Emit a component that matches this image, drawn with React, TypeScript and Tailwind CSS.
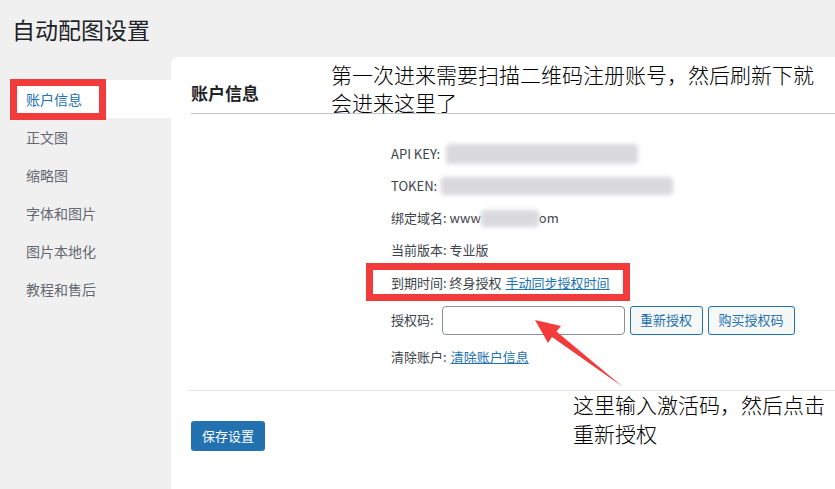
import React from 'react';

const navItems = ['账户信息', '正文图', '缩略图', '字体和图片', '图片本地化', '教程和售后'];

function Blur({ className }: { className: string }) {
  return <span className={`inline-block align-middle rounded-sm bg-[#d9d9de] blur-[2px] ${className}`} />;
}

export default function App() {
  return (
    <div
      className="relative w-[835px] h-[489px] overflow-hidden bg-[#f0f0f1] text-[#3c434a]"
      style={{ fontFamily: '"Noto Sans CJK SC", "Noto Sans", sans-serif' }}
    >
      <div className="h-[57px] pl-[12px] pt-[13px]">
        <h1 className="text-[23px] leading-[32px] text-[#1d2327]">自动配图设置</h1>
      </div>

      <div className="flex h-[432px]">
        <nav className="w-[171px] shrink-0 pl-[17px] pt-[23px]">
          {navItems.map((item, i) => (
            <div
              key={item}
              className={
                i === 0
                  ? 'relative h-[38px] pl-[9px] flex items-center bg-white text-[14px] text-[#2271b1]'
                  : 'h-[38px] pl-[9px] flex items-center text-[14px] text-[#646970]'
              }
            >
              {item}
              {i === 0 && (
                <div className="absolute left-[-7px] top-[-1px] w-[96px] h-[41px] border-[7px] border-[#f23b3b]" />
              )}
            </div>
          ))}
        </nav>

        <main className="flex-1 bg-white rounded-tl-[8px]">
          <div className="ml-[20px] pt-[24px] pb-[8px] border-b border-[#c3c4c7]">
            <h2 className="text-[17px] leading-[24px] font-bold text-[#1d2327]">账户信息</h2>
          </div>

          <div className="pl-[220px] pt-[24px] text-[13px]">
            <div className="h-[32px] flex items-center">
              API KEY: <Blur className="ml-[6px] w-[192px] h-[20px]" />
            </div>
            <div className="h-[32px] flex items-center">
              TOKEN: <Blur className="ml-[4px] w-[232px] h-[18px]" />
            </div>
            <div className="h-[32px] flex items-center">
              绑定域名: www<Blur className="w-[58px] h-[17px]" />om
            </div>
            <div className="h-[32px] flex items-center">当前版本: 专业版</div>
            <div className="relative h-[34px] flex items-center">
              到期时间: 终身授权
              <a className="ml-[4px] text-[#2271b1] underline">手动同步授权时间</a>
              <div className="absolute left-[-25px] top-[-3px] w-[264px] h-[38px] border-[7px] border-[#f23b3b]" />
            </div>
            <div className="h-[40px] flex items-center">
              <span>授权码:</span>
              <input className="ml-[8px] w-[183px] h-[29px] rounded-[4px] border border-[#8c8f94] bg-white" />
              <button className="ml-[5px] h-[29px] w-[73px] rounded-[3px] border border-[#2271b1] bg-[#f6f7f7] text-[13px] text-[#2271b1]">
                重新授权
              </button>
              <button className="ml-[5px] h-[29px] w-[87px] rounded-[3px] border border-[#2271b1] bg-[#f6f7f7] text-[13px] text-[#2271b1]">
                购买授权码
              </button>
            </div>
            <div className="h-[33px] flex items-center">
              清除账户: <a className="ml-[4px] text-[#2271b1] underline">清除账户信息</a>
            </div>
          </div>

          <div className="ml-[16px] mt-[17px] border-t border-[#e6e6e6]" />

          <div className="pl-[20px] pt-[30px]">
            <button className="h-[30px] w-[74px] rounded-[3px] bg-[#2271b1] text-[13px] text-white">保存设置</button>
          </div>
        </main>
      </div>

      <p className="absolute left-[331px] top-[60px] w-[500px] text-[21px] leading-[28px] font-light text-black">
        第一次进来需要扫描二维码注册账号，然后刷新下就会进来这里了
      </p>
      <p className="absolute left-[573px] top-[390px] w-[262px] text-[21px] leading-[29px] font-light text-black">
        这里输入激活码，然后点击重新授权
      </p>

      <svg className="absolute left-0 top-0 pointer-events-none" width="835" height="489">
        <polygon
          points="535,320 561,326 556.5,331.5 623,387 552,337 548,343"
          fill="#f23b3b"
        />
      </svg>
    </div>
  );
}
